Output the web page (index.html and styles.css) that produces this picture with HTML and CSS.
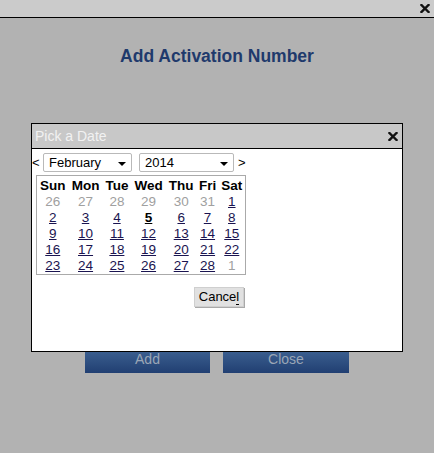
FILE: index.html
```html
<!DOCTYPE html>
<html>
<head>
<meta charset="utf-8">
<link rel="stylesheet" href="styles.css">
</head>
<body>
<div class="topbar"><svg class="topclose" width="10" height="9" viewBox="0 0 10 9"><path d="M1.5 1 L8.5 8 M8.5 1 L1.5 8" stroke="#111" stroke-width="2.4" stroke-linecap="square"/></svg></div>
<div class="main">
  <h1 class="title">Add Activation Number</h1>
  <div class="actions">
    <div class="btn">Add</div>
    <div class="btn btn-close">Close</div>
  </div>
</div>
<div class="dialog">
  <div class="dhead"><span>Pick a Date</span><svg class="dclose" width="10" height="9" viewBox="0 0 10 9"><path d="M1.5 1 L8.5 8 M8.5 1 L1.5 8" stroke="#111" stroke-width="2.4" stroke-linecap="square"/></svg></div>
  <div class="dbody">
    <div class="nav">
      <span class="arrow">&lt;</span>
      <div class="sel sel-month"><span>February</span><span class="tri"></span></div>
      <div class="sel sel-year"><span>2014</span><span class="tri"></span></div>
      <span class="arrow">&gt;</span>
    </div>
    <table class="cal">
      <tr class="hd"><th>Sun</th><th>Mon</th><th>Tue</th><th>Wed</th><th>Thu</th><th>Fri</th><th>Sat</th></tr>
      <tr><td class="o">26</td><td class="o">27</td><td class="o">28</td><td class="o">29</td><td class="o">30</td><td class="o">31</td><td><u>1</u></td></tr>
      <tr><td><u>2</u></td><td><u>3</u></td><td><u>4</u></td><td><u class="b">5</u></td><td><u>6</u></td><td><u>7</u></td><td><u>8</u></td></tr>
      <tr><td><u>9</u></td><td><u>10</u></td><td><u>11</u></td><td><u>12</u></td><td><u>13</u></td><td><u>14</u></td><td><u>15</u></td></tr>
      <tr><td><u>16</u></td><td><u>17</u></td><td><u>18</u></td><td><u>19</u></td><td><u>20</u></td><td><u>21</u></td><td><u>22</u></td></tr>
      <tr><td><u>23</u></td><td><u>24</u></td><td><u>25</u></td><td><u>26</u></td><td><u>27</u></td><td><u>28</u></td><td class="o">1</td></tr>
    </table>
    <div class="cancelrow"><div class="cancel">Cance<u>l</u></div></div>
  </div>
</div>
</body>
</html>
```
FILE: styles.css
```css
html, body {
  margin: 0;
  padding: 0;
}
body {
  width: 434px;
  height: 453px;
  background: #b2b2b2;
  font-family: "Liberation Sans", Arial, sans-serif;
  position: relative;
  overflow: hidden;
}
.topbar {
  height: 17px;
  background: #cbcbcb;
  border-bottom: 1px solid #000;
  display: flex;
  justify-content: flex-end;
  align-items: center;
}
.topclose {
  margin-right: 4px;
}
.main {
  display: flex;
  flex-direction: column;
  align-items: center;
}
.title {
  margin: 28px 0 0 0;
  font-size: 17.5px;
  line-height: 20px;
  font-weight: bold;
  color: #1f3a6c;
}
.actions {
  margin-top: 280px;
  display: flex;
  gap: 13px;
}
.btn {
  width: 125px;
  height: 27px;
  background: linear-gradient(#416696, #213f72);
  color: #9aa6b6;
  font-size: 14px;
  line-height: 27px;
  text-align: center;
}
.btn-close {
  width: 126px;
}
.dialog {
  position: absolute;
  left: 31px;
  top: 123px;
  width: 370px;
  height: 227px;
  border: 1px solid #000;
  background: #fff;
  display: flex;
  flex-direction: column;
}
.dhead {
  height: 24px;
  background: #c8c8c8;
  border-bottom: 1px solid #000;
  display: flex;
  justify-content: space-between;
  align-items: center;
  padding: 0 4px 0 3px;
  color: #f2f2f2;
  font-size: 14px;
}
.dbody {
  padding: 4px 0 0 1px;
}
.nav {
  display: flex;
  align-items: center;
  height: 19px;
  font-size: 13px;
}
.arrow {
  width: 10px;
  color: #000;
}
.arrow:first-child {
  margin-left: -1px;
  width: 11px;
}
.arrow:last-child {
  margin-left: 4px;
}
.sel {
  box-sizing: border-box;
  height: 19px;
  border: 1px solid #b9b9b9;
  border-radius: 2px;
  display: flex;
  align-items: center;
  justify-content: space-between;
  padding: 0 5px 0 5px;
  font-size: 13px;
  color: #000;
}
.sel-month {
  width: 89px;
}
.sel-year {
  width: 95px;
  margin-left: 7px;
}
.tri {
  width: 0;
  height: 0;
  border-left: 4px solid transparent;
  border-right: 4px solid transparent;
  border-top: 4px solid #000;
  margin-top: 2px;
}
.cal {
  margin: 3px 0 0 3px;
  width: 210px;
  border: 1px solid #aaa;
  border-collapse: separate;
  border-spacing: 0;
  font-size: 13px;
}
.cal th {
  font-weight: bold;
  color: #000;
  padding: 2px 1px 0;
  height: 16px;
  line-height: 16px;
  font-size: 13.5px;
}
.cal td {
  text-align: center;
  height: 16px;
  line-height: 16px;
  padding: 0;
  color: #1a1450;
  font-size: 13.5px;
}
.cal td.o {
  color: #a0a0a0;
}
.cal u.b {
  font-weight: bold;
  color: #000;
}
.cancelrow {
  display: flex;
  justify-content: flex-start;
  padding-left: 161px;
  margin-top: 12px;
}
.cancel {
  box-sizing: border-box;
  width: 50px;
  height: 20px;
  background: #e1e1e1;
  border: 1px solid #cfcfcf;
  box-shadow: 1px 1px 0 #a9a9a9;
  font-size: 13px;
  line-height: 18px;
  text-align: center;
  color: #000;
}
.cancel u {
  text-decoration: none;
  border-bottom: 1px solid #000;
}
```
